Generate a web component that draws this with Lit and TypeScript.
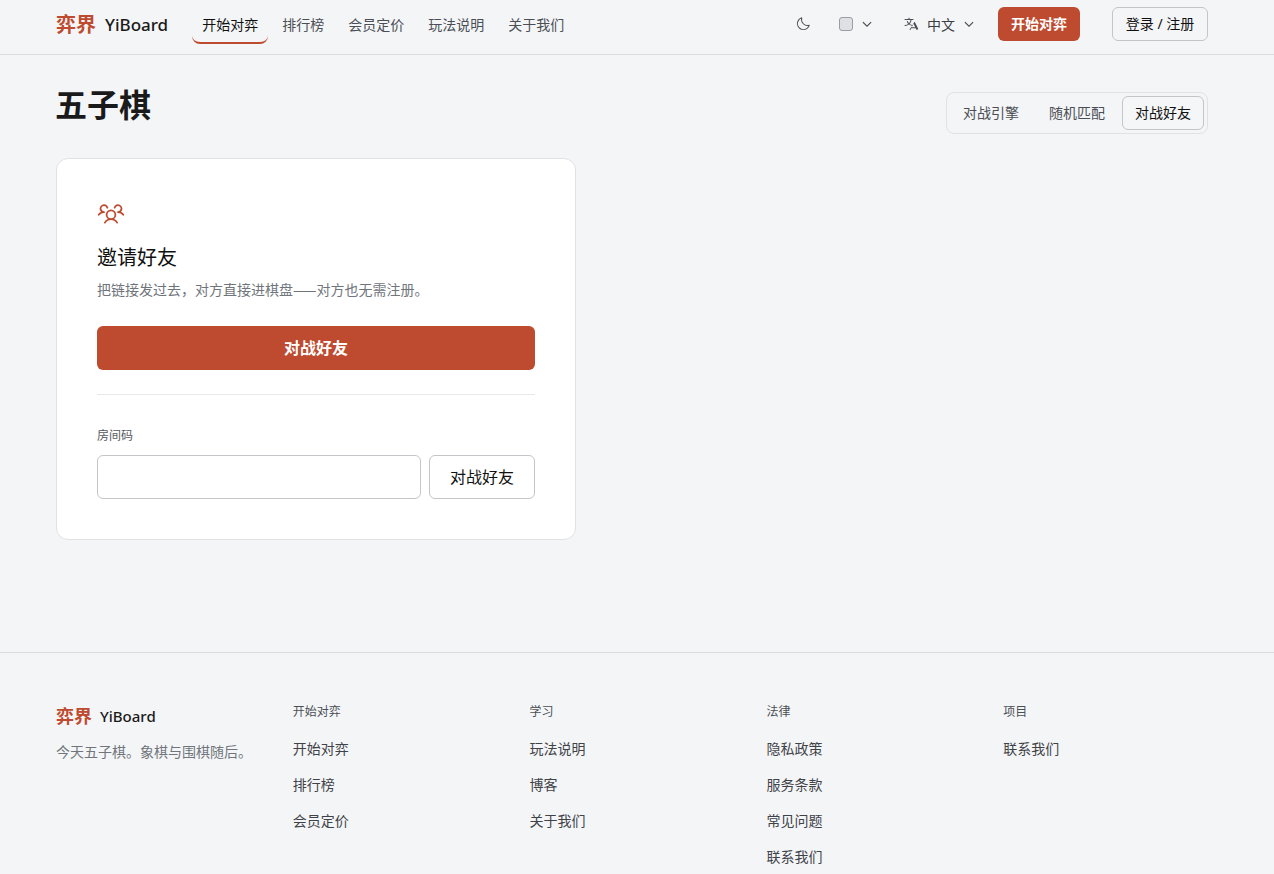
import { LitElement, html, css, svg } from "lit";
import { customElement } from "lit/decorators.js";

const P = {
  moon: "M233.54,142.23a8,8,0,0,0-8-2,88.08,88.08,0,0,1-109.8-109.8,8,8,0,0,0-10-10,104.84,104.84,0,0,0-52.91,37A104,104,0,0,0,136,224a103.09,103.09,0,0,0,62.52-20.88,104.84,104.84,0,0,0,37-52.91A8,8,0,0,0,233.54,142.23ZM188.9,190.34A88,88,0,0,1,65.66,67.11a89,89,0,0,1,31.4-26A106,106,0,0,0,96,56,104.11,104.11,0,0,0,200,160a106,106,0,0,0,14.92-1.06A89,89,0,0,1,188.9,190.34Z",
  caret: "M213.66,101.66l-80,80a8,8,0,0,1-11.32,0l-80-80A8,8,0,0,1,53.66,90.34L128,164.69l74.34-74.35a8,8,0,0,1,11.32,11.32Z",
  translate: "M247.15,212.42l-56-112a8,8,0,0,0-14.31,0l-21.71,43.43A88,88,0,0,1,108,126.93,103.65,103.65,0,0,0,135.69,64H160a8,8,0,0,0,0-16H104V32a8,8,0,0,0-16,0V48H32a8,8,0,0,0,0,16h87.63A87.76,87.76,0,0,1,96,116.35a87.74,87.74,0,0,1-19-31,8,8,0,1,0-15.08,5.34A103.63,103.63,0,0,0,84,127a87.55,87.55,0,0,1-52,17,8,8,0,0,0,0,16,103.46,103.46,0,0,0,64-22.08,104.18,104.18,0,0,0,51.58,20.52L105.85,212.42a8,8,0,0,0,14.31,7.16L132.94,194h70.11l12.79,25.58a8,8,0,1,0,14.31-7.16ZM140.94,178,168,123.89,195.06,178Z",
  users: "M244.8,150.4a8,8,0,0,1-11.2-1.6A51.6,51.6,0,0,0,192,128a8,8,0,0,1-7.37-4.89,8,8,0,0,1,0-6.22A8,8,0,0,1,192,112a24,24,0,1,0-23.24-30,8,8,0,1,1-15.5-4A40,40,0,1,1,219,117.51a67.94,67.94,0,0,1,27.43,21.68A8,8,0,0,1,244.8,150.4ZM190.92,212a8,8,0,1,1-13.84,8,57,57,0,0,0-98.16,0,8,8,0,1,1-13.84-8,72.06,72.06,0,0,1,33.74-29.92,48,48,0,1,1,58.36,0A72.06,72.06,0,0,1,190.92,212ZM128,176a32,32,0,1,0-32-32A32,32,0,0,0,128,176ZM72,120a8,8,0,0,0-8-8A24,24,0,1,1,87.24,82a8,8,0,1,0,15.5-4A40,40,0,1,0,37,117.51,67.94,67.94,0,0,0,9.6,139.19a8,8,0,1,0,12.8,9.61A51.6,51.6,0,0,1,64,128,8,8,0,0,0,72,120Z",
};
const icon = (d: string, size: number, cls = "") =>
  html`<svg class=${cls} width=${size} height=${size} viewBox="0 0 256 256" fill="currentColor">${svg`<path d=${d}></path>`}</svg>`;

const footer = [
  { t: "开始对弈", l: ["开始对弈", "排行榜", "会员定价"] },
  { t: "学习", l: ["玩法说明", "博客", "关于我们"] },
  { t: "法律", l: ["隐私政策", "服务条款", "常见问题", "联系我们"] },
  { t: "项目", l: ["联系我们"] },
];

@customElement("app-root")
export class AppRoot extends LitElement {
  static styles = css`
    :host {
      display: block;
      background: #f4f5f7;
      color: #1a1a1a;
      font-family: "Noto Sans", "Noto Sans CJK SC", sans-serif;
      font-size: 14px;
    }
    * { box-sizing: border-box; }
    a { color: inherit; text-decoration: none; }
    button { font: inherit; cursor: pointer; }
    svg { display: block; flex: none; }
    .wrap { width: 1152px; margin-left: 56px; }

    header { height: 55px; border-bottom: 1px solid #dcdde0; }
    header .wrap { height: 48px; display: flex; align-items: center; }
    .logo { display: flex; align-items: center; gap: 9px; }
    header .logo { margin-top: 2px; }
    .logo .zh { color: #be4b2f; font-size: 20px; font-weight: 700; line-height: 28px; }
    .logo .en { color: #1a1a1a; font-size: 17px; font-weight: 500; line-height: 28px; }
    nav { display: flex; gap: 4px; margin-left: 24px; align-self: flex-start; }
    nav a { color: #4b4f55; height: 38px; margin-top: 6px; padding: 0 10px; display: flex; align-items: center; border-radius: 0 0 8px 8px; border-bottom: 2px solid transparent; }
    nav a.on { color: #111; border-bottom-color: #be4b2f; }
    .right { margin-left: auto; display: flex; align-items: center; }
    .moon { color: #4b4f55; }
    .swatch { width: 14px; height: 14px; border: 1px solid #9a9ca1; border-radius: 3px; background: #dfe0e3; margin-left: 28px; }
    .caret { color: #33363a; stroke: currentColor; stroke-width: 8; }
    .swatch + .caret { margin-left: 8px; }
    .tr { color: #4b4f55; margin-left: 30px; }
    .lang { margin-left: 8px; margin-right: 8px; color: #3a3d42; }
    .primary-s { margin-left: 23px; width: 82px; height: 34px; border: 0; border-radius: 6px; background: #be4b2f; color: #fff; font-weight: 700; padding: 0 0 2px; }
    .ghost-s { margin-left: 32px; width: 96px; height: 34px; border: 1px solid #c4c5c9; border-radius: 6px; background: transparent; color: #111; padding: 0 0 2px; }

    main { height: 597px; padding-top: 28px; }
    .top { display: flex; justify-content: space-between; align-items: flex-start; height: 75px; }
    h1 { margin: 0 0 0 -1px; font-size: 32px; line-height: 44px; font-weight: 700; color: #1a1a1a; }
    .seg { margin-top: 9px; display: flex; gap: 4px; padding: 3px; height: 42px; border: 1px solid #e1e2e5; border-radius: 8px; }
    .seg span { width: 82px; height: 34px; padding-bottom: 2px; display: flex; align-items: center; justify-content: center; border: 1px solid transparent; border-radius: 6px; color: #4b4f55; }
    .seg span.on { color: #111; border-color: #c4c5c9; background: #f5f6f7; }

    .card { width: 520px; height: 382px; background: #fff; border: 1px solid #e1e2e5; border-radius: 12px; padding: 40px; }
    .card .users { color: #be4b2f; }
    h2 { margin: 17px 0 0; font-size: 20px; line-height: 28px; font-weight: 400; color: #111; }
    .desc { margin: 7px 0 0; font-family: "Noto Sans CJK SC", sans-serif; font-size: 14px; line-height: 20px; color: #70757c; }
    .cta { margin-top: 27px; display: block; width: 100%; height: 44px; border: 0; border-radius: 6px; background: #be4b2f; color: #fff; font-size: 16px; font-weight: 700; padding: 0 0 2px; }
    hr { margin: 24px 0 0; border: 0; border-top: 1px solid #e8e9eb; }
    label { display: block; margin-top: 33px; font-size: 12px; line-height: 16px; color: #55595e; }
    .row { display: flex; gap: 8px; margin-top: 11px; }
    input { flex: 1; min-width: 0; height: 44px; border: 1px solid #c4c5c9; border-radius: 6px; background: #fff; }
    .join { width: 106px; height: 44px; border: 1px solid #c4c5c9; border-radius: 6px; background: #fff; color: #111; font-size: 16px; padding: 0 0 2px; }

    footer { border-top: 1px solid #dcdde0; padding: 49px 0 16px; }
    footer .wrap { display: grid; grid-template-columns: repeat(5, 1fr); gap: 32px; }
    .flogo { gap: 8px; }
    .flogo .zh { font-size: 18px; line-height: 28px; }
    .flogo .en { font-size: 15px; line-height: 28px; }
    .tag { margin: 12px 0 0; line-height: 20px; color: #70757c; white-space: nowrap; }
    h3 { margin: 0; font-size: 12px; line-height: 20px; font-weight: 400; color: #4b4f55; }
    .links { margin-top: 8px; display: flex; flex-direction: column; }
    .links a { height: 36px; display: flex; align-items: center; color: #3f4348; }
  `;

  render() {
    return html`
      <header><div class="wrap">
        <a class="logo"><span class="zh">弈界</span><span class="en">YiBoard</span></a>
        <nav>
          <a class="on">开始对弈</a><a>排行榜</a><a>会员定价</a><a>玩法说明</a><a>关于我们</a>
        </nav>
        <div class="right">
          ${icon(P.moon, 16, "moon")}
          <span class="swatch"></span>${icon(P.caret, 12, "caret")}
          ${icon(P.translate, 16, "tr")}<span class="lang">中文</span>${icon(P.caret, 12, "caret")}
          <button class="primary-s">开始对弈</button>
          <button class="ghost-s">登录 / 注册</button>
        </div>
      </div></header>
      <main><div class="wrap">
        <div class="top">
          <h1>五子棋</h1>
          <div class="seg"><span>对战引擎</span><span>随机匹配</span><span class="on">对战好友</span></div>
        </div>
        <section class="card">
          ${icon(P.users, 28, "users")}
          <h2>邀请好友</h2>
          <p class="desc">把链接发过去，对方直接进棋盘——对方也无需注册。</p>
          <button class="cta">对战好友</button>
          <hr />
          <label for="code">房间码</label>
          <div class="row"><input id="code" /><button class="join">对战好友</button></div>
        </section>
      </div></main>
      <footer><div class="wrap">
        <div>
          <a class="logo flogo"><span class="zh">弈界</span><span class="en">YiBoard</span></a>
          <p class="tag">今天五子棋。象棋与围棋随后。</p>
        </div>
        ${footer.map((c) => html`<div><h3>${c.t}</h3><div class="links">${c.l.map((x) => html`<a>${x}</a>`)}</div></div>`)}
      </div></footer>
    `;
  }
}
